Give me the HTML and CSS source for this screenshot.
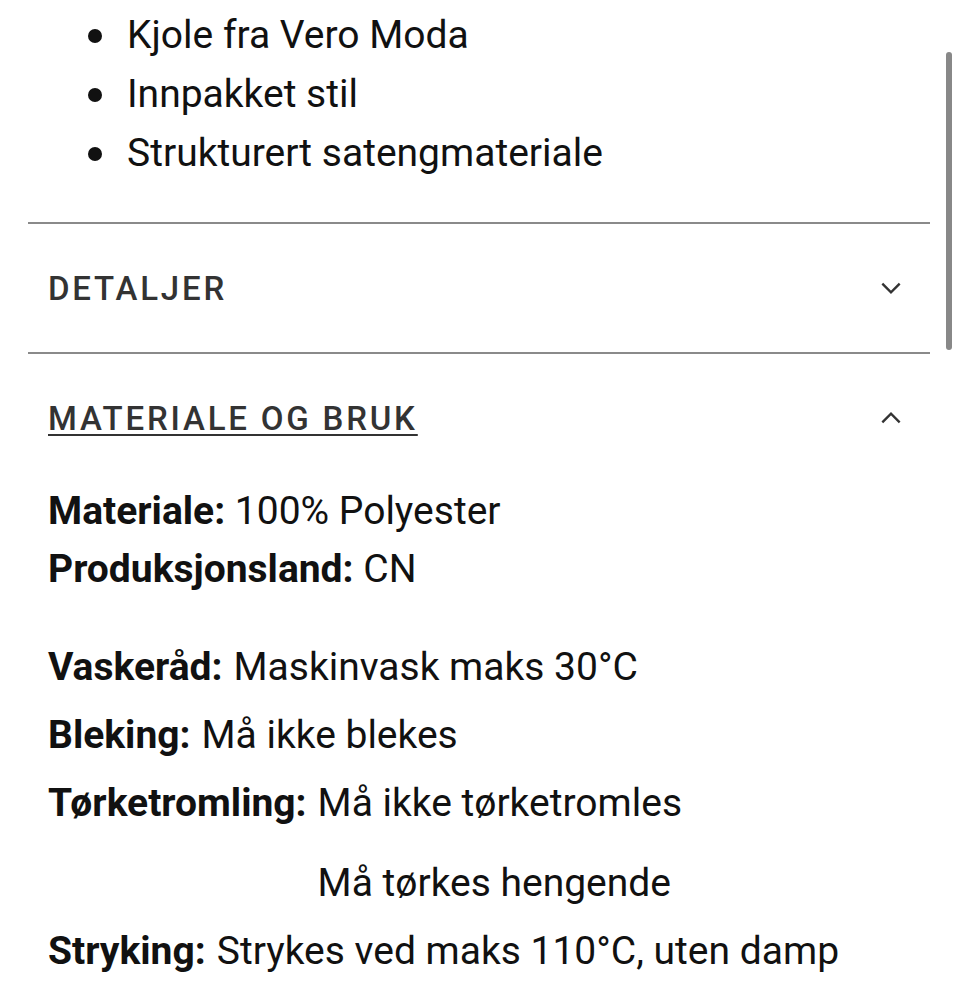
FILE: index.html
```html
<!DOCTYPE html>
<html lang="no">
<head>
    <meta charset="UTF-8">
    <meta name="viewport" content="width=device-width, initial-scale=1.0">
    <title>Produktinfo</title>
    <link rel="stylesheet" href="styles.css">
</head>
<body>

    <div class="product-info">
        <ul class="highlights">
            <li>Kjole fra Vero Moda</li>
            <li>Innpakket stil</li>
            <li>Strukturert satengmateriale</li>
        </ul>

        <div class="accordion">
            <div class="accordion-item">
                <button class="accordion-head">
                    <span class="accordion-title">DETALJER</span>
                    <svg class="chevron" viewBox="0 0 24 24"><path d="M4 8l8 8 8-8"/></svg>
                </button>
            </div>

            <div class="accordion-item open">
                <button class="accordion-head">
                    <span class="accordion-title">MATERIALE OG BRUK</span>
                    <svg class="chevron" viewBox="0 0 24 24"><path d="M4 16l8-8 8 8"/></svg>
                </button>
                <div class="accordion-body">
                    <div class="facts">
                        <p><b>Materiale:</b> 100% Polyester</p>
                        <p><b>Produksjonsland:</b> CN</p>
                    </div>
                    <div class="care">
                        <div class="care-row"><b>Vaskeråd:</b><span>Maskinvask maks 30°C</span></div>
                        <div class="care-row"><b>Bleking:</b><span>Må ikke blekes</span></div>
                        <div class="care-row">
                            <b>Tørketromling:</b>
                            <div class="care-values">
                                <span>Må ikke tørketromles</span>
                                <span>Må tørkes hengende</span>
                            </div>
                        </div>
                        <div class="care-row"><b>Stryking:</b><span>Strykes ved maks 110°C, uten damp</span></div>
                    </div>
                </div>
            </div>
        </div>
    </div>

    <div class="scrollbar"></div>

</body>
</html>
```

FILE: styles.css
```css
* {
    margin: 0;
    padding: 0;
    box-sizing: border-box;
}

body {
    background-color: white;
    color: #111;
    font-family: Roboto, "Liberation Sans", sans-serif;
    font-size: 39px;
}

.product-info {
    width: 902px;
    margin-left: 28px;
}

.highlights {
    list-style: none;
    padding: 6px 0 0 60px;
    margin-bottom: 39px;
}

.highlights li {
    display: flex;
    align-items: center;
    gap: 25px;
    line-height: 59px;
}

/* round dot instead of the default marker */
.highlights li::before {
    content: "";
    width: 14px;
    height: 14px;
    border-radius: 50%;
    background-color: #111;
}

.accordion-item {
    border-top: 2px solid #8a8a8a;
}

.accordion-head {
    width: 100%;
    height: 128px;
    display: flex;
    align-items: center;
    justify-content: space-between;
    padding: 0 26px 0 20px;
    background: none;
    border: none;
    color: #333;
    font-family: inherit;
}

.accordion-title {
    font-size: 33px;
    font-weight: 500;
    letter-spacing: 2.8px;
}

.open .accordion-title {
    text-decoration: underline;
    text-underline-offset: 4px;
    text-decoration-thickness: 2px;
}

.chevron {
    width: 26px;
    height: 26px;
    fill: none;
    stroke: #333;
    stroke-width: 2.2;
}

.accordion-body {
    padding: 0 20px;
}

.facts {
    margin-bottom: 35px;
}

.facts p {
    line-height: 58px;
}

.care-row {
    display: flex;
    gap: 11px;
    line-height: 68px;
}

.care-values {
    display: flex;
    flex-direction: column;
    gap: 12px;
}

b {
    font-weight: 700;
}

.scrollbar {
    position: fixed;
    top: 52px;
    left: 946px;
    width: 6px;
    height: 298px;
    border-radius: 3px;
    background-color: #888;
}
```
